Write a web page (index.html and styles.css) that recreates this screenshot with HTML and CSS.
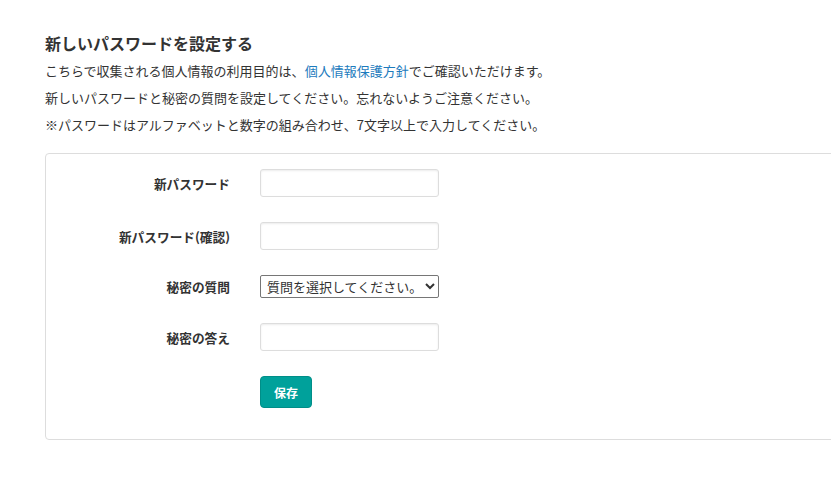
FILE: index.html
```html
<!DOCTYPE html>
<html lang="ja">
<head>
    <meta charset="UTF-8">
    <meta name="viewport" content="width=device-width, initial-scale=1.0">
    <title>新しいパスワードを設定する</title>
    <link rel="stylesheet" href="styles.css">
</head>
<body>
    <div class="page">
        <h2>新しいパスワードを設定する</h2>
        <p>こちらで収集される個人情報の利用目的は、<a href="#">個人情報保護方針</a>でご確認いただけます。</p>
        <p>新しいパスワードと秘密の質問を設定してください。忘れないようご注意ください。</p>
        <p>※パスワードはアルファベットと数字の組み合わせ、7文字以上で入力してください。</p>

        <div class="panel">
            <div class="form-row">
                <label for="pw">新パスワード</label>
                <input type="password" id="pw">
            </div>
            <div class="form-row">
                <label for="pw2">新パスワード(確認)</label>
                <input type="password" id="pw2">
            </div>
            <div class="form-row">
                <label for="question">秘密の質問</label>
                <select id="question">
                    <option>質問を選択してください。</option>
                </select>
            </div>
            <div class="form-row">
                <label for="answer">秘密の答え</label>
                <input type="text" id="answer">
            </div>
            <div class="form-row">
                <span></span>
                <div><button type="button">保存</button></div>
            </div>
        </div>
    </div>
</body>
</html>
```

FILE: styles.css
```css
html, body {
    overflow: hidden;
}
body {
    margin: 0;
    font-family: "Noto Sans CJK JP", "Noto Sans", sans-serif;
    color: #333;
    background: #fff;
}
.page {
    padding: 30px 0 0 45px;
}
h2 {
    font-size: 16px;
    font-weight: bold;
    margin: 0 0 1px 0;
    line-height: 26px;
}
p {
    font-size: 13px;
    margin: 0;
    line-height: 27px;
}
a {
    color: #1d7bbd;
    text-decoration: none;
}
.panel {
    margin-top: 15px;
    width: 900px;
    border: 1px solid #ddd;
    border-radius: 4px;
    padding: 15px 0 31px 0;
    display: flex;
    flex-direction: column;
    gap: 25px;
}
.form-row {
    display: grid;
    grid-template-columns: 184px 179px;
    column-gap: 30px;
    align-items: center;
}
label {
    text-align: right;
    font-size: 12.7px;
    font-weight: bold;
}
input {
    width: 179px;
    height: 28px;
    box-sizing: border-box;
    border: 1px solid #ddd;
    border-radius: 3px;
    box-shadow: inset 0 1px 2px rgba(0, 0, 0, 0.08);
    padding: 4px 6px;
    font-size: 12px;
}
select {
    width: 179px;
    height: 23px;
    box-sizing: border-box;
    border: 1px solid #767676;
    border-radius: 2px;
    background: #fff;
    color: #333;
    font-family: inherit;
    font-size: 13px;
    padding: 0 2px;
}
button {
    width: 52px;
    height: 32px;
    background-color: #00a19b;
    color: #fff;
    border: 1px solid #008e88;
    border-radius: 4px;
    font-family: inherit;
    font-size: 12px;
    font-weight: bold;
    cursor: pointer;
}
```
